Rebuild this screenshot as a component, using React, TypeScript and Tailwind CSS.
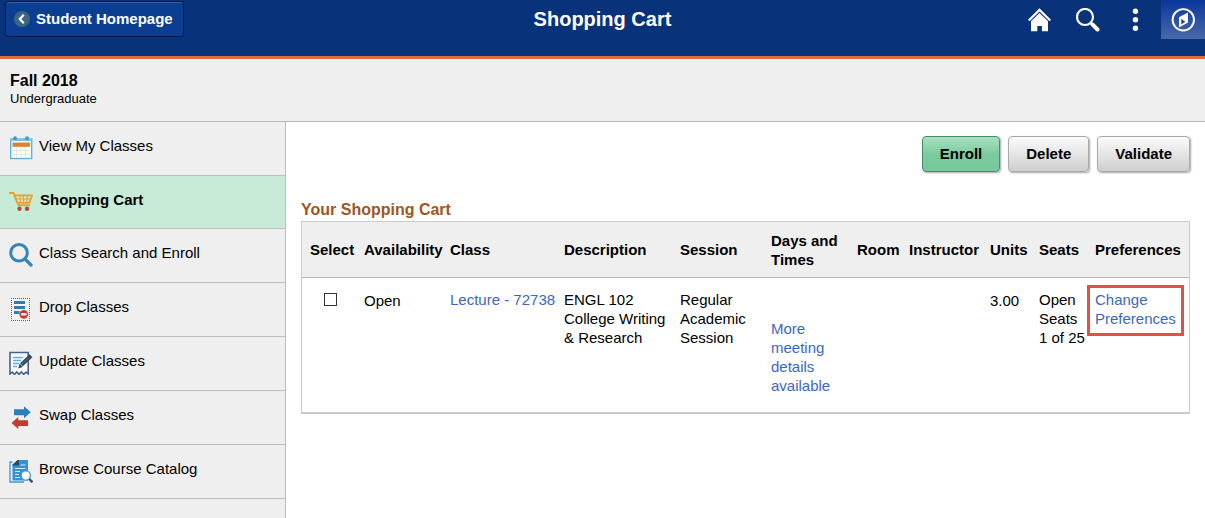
import type { ReactNode } from "react";

const CalendarIcon = () => (
  <svg width="24" height="24" viewBox="0 0 24 24">
    <rect x="1.7" y="3.2" width="21" height="19.3" fill="#fff" stroke="#5fb1dc" strokeWidth="1.4" />
    <path d="M1 2.500h22.400v2.500H1z" fill="#7fc0e2" />
    <circle cx="6" cy="2.200" r="1.900" fill="#3f96c9" />
    <circle cx="18" cy="2.200" r="1.900" fill="#3f96c9" />
    <rect x="3.500" y="6.500" width="17.500" height="4.300" fill="#dd7f35" />
    <path d="M3.500 14.500h17.500M3.500 18.500h17.500M7.500 11.500v10M12 11.500v10M16.500 11.500v10" stroke="#e3e3df" strokeWidth="1" />
  </svg>
);

const CartIcon = () => (
  <svg width="24" height="24" viewBox="0 0 24 24" fill="none">
    <path d="M0 4h4.500l5 12.200h11.500" stroke="#e5a230" strokeWidth="2" />
    <path d="M5.500 6.400H23l-2.600 7.400H8.600" stroke="#e5a230" strokeWidth="1.800" />
    <path d="M7 10h15M10.500 6l1.600 8M14.300 6l.5 8M18.500 6l-.8 8" stroke="#e5a230" strokeWidth="1.200" />
    <circle cx="10.500" cy="19.800" r="2.200" fill="#b54a37" />
    <circle cx="18" cy="19.800" r="2.200" fill="#b54a37" />
  </svg>
);

const MagnifierIcon = () => (
  <svg width="24" height="24" viewBox="0 0 24 24" fill="none" stroke="#3584b8">
    <circle cx="10" cy="9.800" r="8.300" strokeWidth="3" />
    <path d="m16 16 7 7" strokeWidth="3.200" />
  </svg>
);

const DropIcon = () => (
  <svg width="24" height="24" viewBox="0 0 24 24">
    <rect x="2.500" y="1.500" width="18" height="22" fill="#f8f3f3" />
    <path
      d="M2 1.500h19M2 23.500h19M2.500 1v23M20.500 1v23"
      fill="none"
      stroke="#c23a34"
      strokeWidth="1"
      strokeDasharray="1 1"
    />
    <path d="M5 4h11v3H5zM5 9h11v3H5zM5 14h5.500v3H5z" fill="#2f7fb3" />
    <circle cx="14.800" cy="17.300" r="4.400" fill="#c93a32" />
    <path d="M12 16.200h5.600v2.200H12z" fill="#fff" />
  </svg>
);

const UpdateIcon = () => (
  <svg width="24" height="24" viewBox="0 0 24 24" fill="none">
    <path
      d="M1 23V1.500h18.200V23l-2.200-2-2.300 2.400-2.300-2.400-2.300 2.400L7.800 21l-2.300 2.400L3.200 21z"
      fill="#fafcff"
      stroke="#4b5f88"
      strokeWidth="1.600"
    />
    <path d="M4 6.500h10M4 9.500h8M4 12.500h6M4 15.500h4" stroke="#63ace0" strokeWidth="1.700" />
    <path d="m22 4.800-9.500 9" stroke="#35495e" strokeWidth="4.200" />
    <path d="m9.200 17.500 1.300-5 3.400 3.400z" fill="#35495e" />
    <path d="m20.500 6.200-8 7.400" stroke="#5d7288" strokeWidth="1" />
  </svg>
);

const SwapIcon = () => (
  <svg width="24" height="24" viewBox="0 0 24 24">
    <path d="M5 4.300h10V1.200l6.800 6-6.800 6V10.200H5z" fill="#2c80b9" />
    <path d="M19 15.200H9.300v-3.200l-6.800 6 6.800 6v-3H19z" fill="#c43a31" />
  </svg>
);

const CatalogIcon = () => (
  <svg width="24" height="24" viewBox="0 0 24 24" fill="none">
    <path d="M4 3H1v20h14" fill="#e8f3fb" stroke="#4593cc" strokeWidth="1.300" />
    <path d="M8.500 1H19v20.500H3.500V6z" fill="#3591d3" />
    <path d="M3.500 6.500V5.500L8.500 1h1.500v5.500z" fill="#234d72" />
    <path d="M3.500 5 8 1H3.500z" fill="#f4f8fb" />
    <path d="M11.500 6H16.500M6 9.500h10.500M6 12.500h5M6 15.500h4M6 18.500h5" stroke="#d7ebf9" strokeWidth="1.200" />
    <circle cx="16.800" cy="16.500" r="4.600" fill="#fff" stroke="#4d9cd0" strokeWidth="1.400" />
    <path d="m20.200 20 3.300 3.300" stroke="#38536c" strokeWidth="2.400" />
  </svg>
);

const navItems: { label: string; icon: ReactNode; active?: boolean }[] = [
  { label: "View My Classes", icon: <CalendarIcon /> },
  { label: "Shopping Cart", icon: <CartIcon />, active: true },
  { label: "Class Search and Enroll", icon: <MagnifierIcon /> },
  { label: "Drop Classes", icon: <DropIcon /> },
  { label: "Update Classes", icon: <UpdateIcon /> },
  { label: "Swap Classes", icon: <SwapIcon /> },
  { label: "Browse Course Catalog", icon: <CatalogIcon /> },
];

const columns = [
  { label: "Select", width: "w-[54px]" },
  { label: "Availability", width: "w-[86px]" },
  { label: "Class", width: "w-[114px]" },
  { label: "Description", width: "w-[116px]" },
  { label: "Session", width: "w-[91px]" },
  { label: "Days and Times", width: "w-[86px]" },
  { label: "Room", width: "w-[52px]" },
  { label: "Instructor", width: "w-[81px]" },
  { label: "Units", width: "w-[49px]" },
  { label: "Seats", width: "w-[56px]" },
  { label: "Preferences", width: "w-[102px]" },
];

const buttonBase =
  "h-9 rounded border px-[17px] text-[15px] font-bold text-black shadow-[1px_1px_2px_rgba(0,0,0,0.35)]";
const greyButton = "border-[#a9a9a9] bg-linear-to-b from-[#fbfbfb] to-[#cfcfcf]";
const greenButton = "border-[#3f9168] bg-linear-to-b from-[#a9e0c2] via-[#7ccb9e] to-[#76c899]";

function Header() {
  return (
    <header className="grid h-[59px] grid-cols-[1fr_auto_1fr] items-start border-b-3 border-[#de6a44] bg-[#08327a] text-white">
      <div className="pt-px pl-[5px]">
        <button className="flex h-9 items-center gap-[6px] rounded-[3px] border border-[#021340] bg-[#0b3d91] pr-[10px] pl-2 text-[15px] font-bold shadow-[inset_0_1px_0_#3561a8]">
          <svg width="16" height="16" viewBox="0 0 16 16" fill="none">
            <circle cx="8" cy="8" r="8" fill="#3b6583" />
            <path d="M9.800 3.800 5.800 8l4 4.200" stroke="#fff" strokeWidth="2.200" />
          </svg>
          Student Homepage
        </button>
      </div>
      <h1 className="text-xl leading-[38px] font-bold">Shopping Cart</h1>
      <div className="flex h-[39px] items-center justify-end">
        <button aria-label="Home" className="mr-6">
          <svg width="24" height="24" viewBox="0 0 24 24">
            <path d="M11.500.3 0 11.800l1.600 1.500 9.900-9.900 9.900 9.900 1.600-1.500z" fill="#fff" />
            <path d="M11.500 5 3 13.300V23.300h6.300v-5.200h4.600v5.200H20V13.300z" fill="#fff" />
          </svg>
        </button>
        <button aria-label="Search" className="mr-6">
          <svg width="24" height="24" viewBox="0 0 24 24" fill="none" stroke="#fff">
            <circle cx="9" cy="9" r="8" strokeWidth="2.200" />
            <path d="m14.500 14.500 2 2" strokeWidth="2.400" />
            <path d="m16.500 16.500 5 5" strokeWidth="4" strokeLinecap="round" />
          </svg>
        </button>
        <button aria-label="Actions" className="mr-[13px]">
          <svg width="24" height="24" viewBox="0 0 24 24" fill="#fff">
            <circle cx="11.500" cy="3.300" r="2.700" />
            <circle cx="11.500" cy="11.800" r="2.700" />
            <circle cx="11.500" cy="20.300" r="2.700" />
          </svg>
        </button>
        <button
          aria-label="Navigation"
          className="flex h-[39px] w-11 items-center justify-center bg-linear-to-b from-[#08359a] to-[#4a68a8]"
        >
          <svg width="24" height="24" viewBox="0 0 24 24" fill="none">
            <circle cx="12.300" cy="11.800" r="10.700" stroke="#fff" strokeWidth="1.900" />
            <path d="M17 4.500v10l-9 5V9.300z" fill="#fff" />
            <path d="M10.300 10.800v5.600l4-2.700z" fill="#1c4391" />
          </svg>
        </button>
      </div>
    </header>
  );
}

function Sidebar() {
  return (
    <nav className="w-[286px] shrink-0 border-r border-[#bdbdbd] bg-[#efefef]">
      <ul>
        {navItems.map((item) => (
          <li key={item.label}>
            <a
              href="#"
              className={
                item.active
                  ? "flex h-[53px] items-center gap-[7px] border-b border-[#bdbdbd] bg-[#c8ebd8] pl-[9px] text-[15px] font-bold"
                  : "flex h-[54px] items-center gap-[6px] border-b border-[#bdbdbd] pl-[9px] text-[15px]"
              }
            >
              <span className="shrink-0 pb-[2px]">{item.icon}</span>
              <span className="pb-1">{item.label}</span>
            </a>
          </li>
        ))}
      </ul>
    </nav>
  );
}

function CartTable() {
  return (
    <table className="w-full table-fixed border-separate border-spacing-0 border border-b-2 border-[#cbcbcb] text-[15px] leading-[19px]">
      <caption className="h-[21px] text-left text-base leading-[19px] font-bold text-[#a0561f]">
        Your Shopping Cart
      </caption>
      <thead>
        <tr className="h-14 bg-[#efefef] text-left">
          {columns.map((column) => (
            <th
              key={column.label}
              scope="col"
              className={`${column.width} border-b border-[#b9b9b9] pl-2 align-middle font-bold`}
            >
              {column.label}
            </th>
          ))}
        </tr>
      </thead>
      <tbody>
        <tr className="align-top">
          <td className="pt-[15px] pl-[22px]">
            <input
              type="checkbox"
              aria-label="Select Lecture - 72738"
              className="block size-[13px] appearance-none border border-[#333] bg-white checked:bg-[#3366bb]"
            />
          </td>
          <td className="pt-[13px] pl-2">Open</td>
          <td className="pt-3 pl-2 whitespace-nowrap">
            <a href="#" className="text-[#3b68bf]">
              Lecture - 72738
            </a>
          </td>
          <td className="pt-3 pl-2">
            ENGL 102
            <br />
            College Writing
            <br />
            &amp; Research
          </td>
          <td className="pt-3 pl-2">Regular Academic Session</td>
          <td className="pt-[41px] pb-[17px] pl-2">
            <a href="#" className="text-[#3b68bf]">
              More meeting details available
            </a>
          </td>
          <td />
          <td />
          <td className="pt-[13px] pl-2">3.00</td>
          <td className="pt-3 pl-2 whitespace-nowrap">
            Open
            <br />
            Seats
            <br />1 of 25
          </td>
          <td className="pt-[7px] pr-[5px]">
            <a
              href="#"
              className="block border-3 border-[#df5149] pt-[2px] pb-[5px] pl-[5px] text-[#3b68bf]"
            >
              Change Preferences
            </a>
          </td>
        </tr>
      </tbody>
    </table>
  );
}

export default function App() {
  return (
    <div className="flex min-h-screen flex-col bg-white font-['Liberation_Sans',Arial,sans-serif] text-black">
      <Header />
      <section className="border-b border-[#b9b9b9] bg-[#efefef] pt-3 pb-[14px] pl-[10px]">
        <h2 className="text-base leading-5 font-bold">Fall 2018</h2>
        <p className="text-[13px] leading-4">Undergraduate</p>
      </section>
      <div className="flex grow">
        <Sidebar />
        <main className="min-w-0 grow pt-[14px] pr-[15px] pl-[15px]">
          <div className="mb-7 flex justify-end gap-2">
            <button className={`${buttonBase} ${greenButton}`}>Enroll</button>
            <button className={`${buttonBase} ${greyButton}`}>Delete</button>
            <button className={`${buttonBase} ${greyButton}`}>Validate</button>
          </div>
          <CartTable />
        </main>
      </div>
    </div>
  );
}
